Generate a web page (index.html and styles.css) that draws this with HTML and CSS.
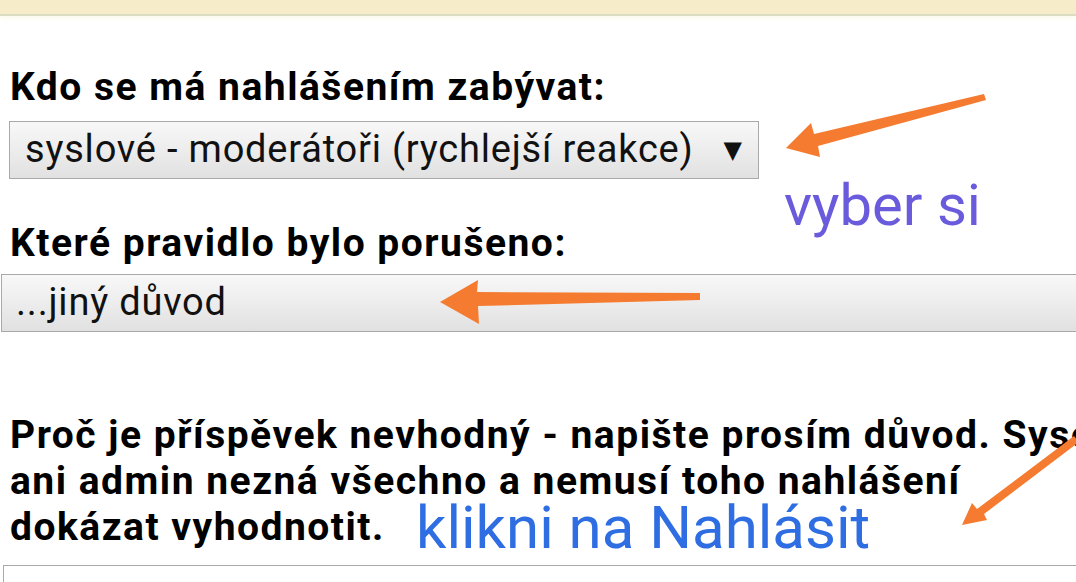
FILE: index.html
```html
<!DOCTYPE html>
<html lang="cs">
<head>
<meta charset="utf-8">
<title>Nahlásit příspěvek</title>
<link rel="stylesheet" href="styles.css">
</head>
<body>
<div class="page">
  <div class="topbar"></div>
  <form class="report">
    <label class="label label-first">Kdo se má nahlášením zabývat:</label>
    <div class="select select-who">
      <span class="select-value">syslové - moderátoři (rychlejší reakce)</span>
      <span class="select-arrow">▼</span>
    </div>
    <label class="label label-second">Které pravidlo bylo porušeno:</label>
    <div class="select select-rule">
      <span class="select-value">...jiný důvod</span>
    </div>
    <p class="label label-why">Proč je příspěvek nevhodný - napište prosím důvod. Sysel<br>ani admin nezná všechno a nemusí toho nahlášení<br>dokázat vyhodnotit.</p>
    <div class="textarea"></div>
  </form>

  <svg class="arrows" width="1076" height="582" viewBox="0 0 1076 582">
    <polygon points="984,94 986,100 818,146 820,157 786,148 811,123 814,134" />
    <polygon points="700,293 700,300 478,306 479,324 440,302 478,280 477,292" />
    <polygon points="1074,436 1079,442 984,514 987,520 962,525 972,503 977,509" />
  </svg>
  <span class="note note-choose">vyber si</span>
  <span class="note note-click">klikni na Nahlásit</span>
</div>
</body>
</html>
```

FILE: styles.css
```css
html, body {
  margin: 0;
  padding: 0;
  background: #ffffff;
  overflow: hidden;
}

.page {
  position: relative;
  width: 1076px;
  height: 582px;
  overflow: hidden;
  font-family: Roboto, "Noto Sans", sans-serif;
  color: #000;
}

.topbar {
  height: 14px;
  background: #f6ecca;
  border-bottom: 2px solid #dcdcc2;
  box-shadow: 0 3px 4px #fbfbef;
}

.report {
  display: flex;
  flex-direction: column;
  align-items: flex-start;
  padding-left: 10px;
  width: 1300px;
}

.label {
  display: block;
  font-weight: 700;
  font-size: 39px;
  letter-spacing: 1.5px;
  line-height: 44px;
  margin: 0;
  white-space: nowrap;
}

.label-first {
  margin-top: 49px;
}

.label-second {
  margin-top: 42px;
}

.label-why {
  margin-top: 80px;
  line-height: 46px;
}

.select {
  box-sizing: border-box;
  display: flex;
  align-items: center;
  height: 58px;
  border: 1px solid #a9a9a9;
  background: linear-gradient(#f8f8f8, #e1e1e1);
  font-size: 38px;
  letter-spacing: 0.8px;
  font-weight: 400;
  color: #111;
}

.select-who {
  width: 750px;
  margin-left: -1px;
  margin-top: 12px;
  padding: 0 16px 0 15px;
  justify-content: space-between;
}

.select-rule {
  width: 1200px;
  margin-left: -9px;
  margin-top: 9px;
  padding-left: 14px;
}

.select-value {
  line-height: 1;
  padding-bottom: 2px;
}

.select-arrow {
  font-family: "DejaVu Sans", sans-serif;
  font-size: 24px;
  letter-spacing: 0;
  line-height: 1;
}

.textarea {
  margin-top: 15px;
  margin-left: -7px;
  width: 1200px;
  height: 80px;
  border: 1px solid #a9a9a9;
  background: #fff;
}

.arrows {
  position: absolute;
  left: 0;
  top: 0;
  fill: #f47b2f;
}

.note {
  position: absolute;
  font-family: Roboto, "Noto Sans", sans-serif;
  font-weight: 400;
  white-space: nowrap;
  line-height: 1;
}

.note-choose {
  left: 784px;
  top: 176px;
  font-size: 58px;
  color: #6a5bdc;
}

.note-click {
  left: 416px;
  top: 498px;
  font-size: 60px;
  color: #2e6ee2;
}
```
